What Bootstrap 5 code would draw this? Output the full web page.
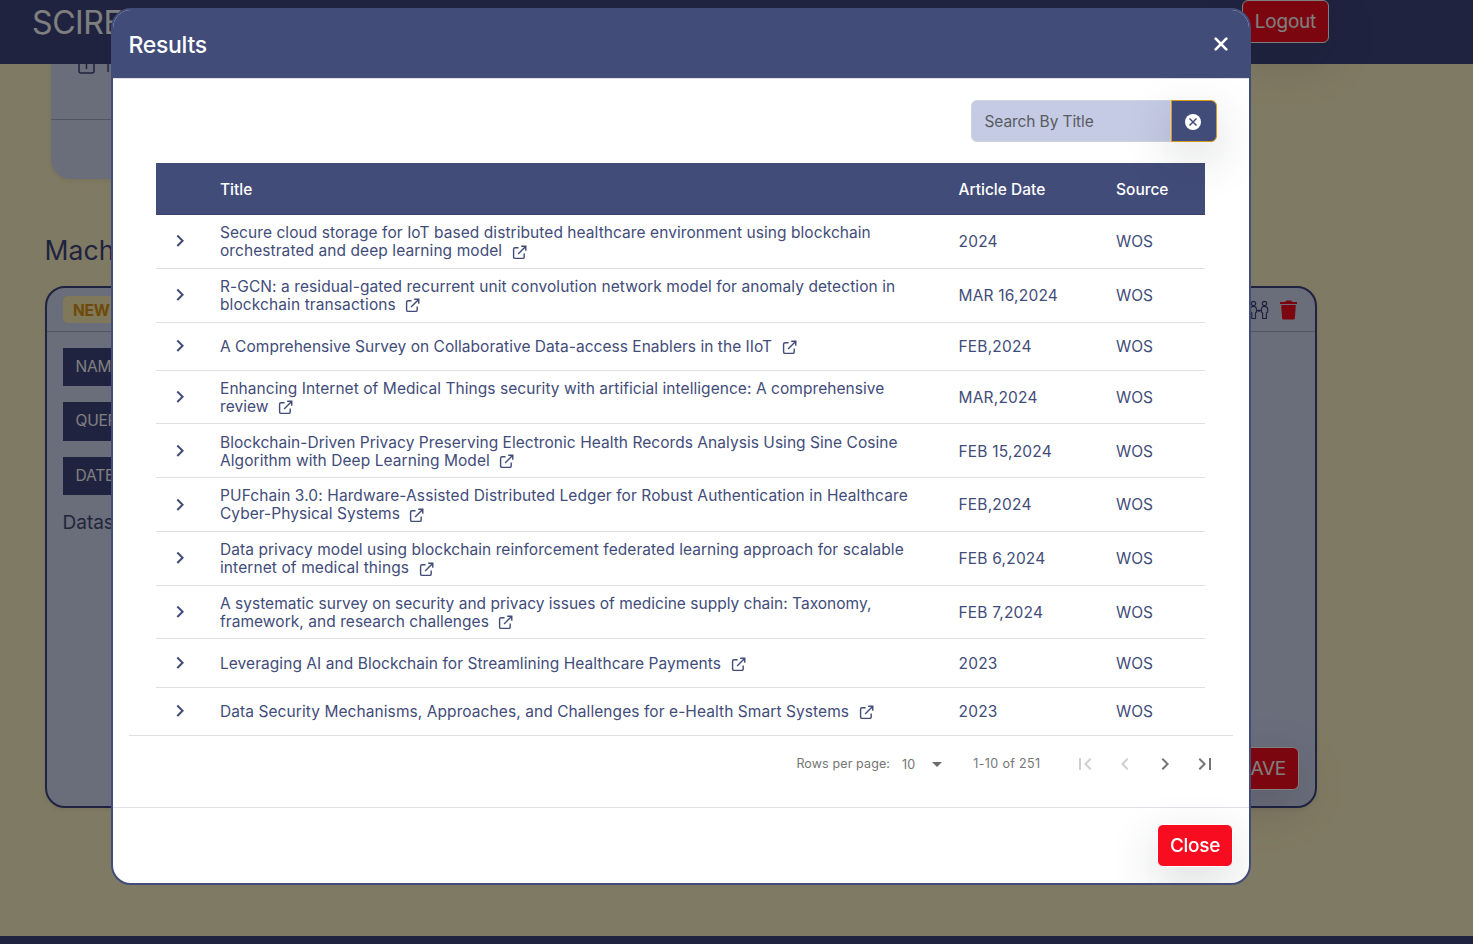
<!DOCTYPE html>
<html lang="en">
<head>
<meta charset="utf-8">
<meta name="viewport" content="width=device-width, initial-scale=1">
<title>Results</title>
<link href="https://cdn.jsdelivr.net/npm/bootstrap@5.3.0/dist/css/bootstrap.min.css" rel="stylesheet">
<style>
:root{--navy:#424c79;--deep:#3e4680;--lilac:#d4daf5;--rule:#e0e0e0}
body{font-family:Inter,"Liberation Sans",sans-serif;font-size:15.5px;color:var(--navy);background:#fff4c6;height:944px;overflow:hidden;letter-spacing:-.05px}
.topbar{height:64px;background:var(--deep);position:relative;z-index:1}
.brand{font-size:32px;line-height:46px;color:#fff;margin-left:32px;letter-spacing:-.4px}
.btn-red{background:#f70d1f;border:1px solid #fff;color:#fff;font-size:19px;line-height:29px;padding:6px 12px;border-radius:6px;height:43px;letter-spacing:-.25px}
.btn-red:hover{background:#d80b1b;color:#fff}
.logout{margin-right:144px}
.panel{background:var(--lilac);border-radius:20px}
.intro{margin:-36px 0 0 51px;width:900px;height:151px}
.intro-row{height:92px;border-bottom:1px solid #a5aac0;padding:27px 0 0 27px}
.mach{font-size:26.5px;font-weight:400;line-height:32px;margin:55px 0 0 44.5px;letter-spacing:.1px;color:var(--deep)}
.machine{margin:20px 0 0 45px;width:1272px;height:522px;border:2px solid var(--deep)}
.machine-head{height:44px;border-bottom:1px solid #a5aac0;padding:0 17px 0 16px}
.tag-new{background:#fff0b5;color:#dd9412;font-weight:700;border-radius:5px;padding:1px 10px 0;height:27px;line-height:28px;letter-spacing:-.2px}
.label-box{background:var(--deep);color:#fff;width:120px;height:38.4px;line-height:38.4px;padding-left:12.5px;margin:0 0 16px 16px;letter-spacing:-.2px}
.dataset{font-size:19px;line-height:24px;letter-spacing:0;margin-left:15.5px}
.veil{position:fixed;inset:0;background:#000;opacity:.5;z-index:5}
.dialog-wrap{position:fixed;inset:0;z-index:10;padding-top:8px}
.dialog-box{width:1140px;height:877px;margin-left:111px;background:#fff;border:2px solid var(--navy);border-radius:20px;overflow:hidden}
.dialog-head{background:var(--navy);color:#fff;height:70px;border-bottom:1px solid #dee2e6;padding:0 22px 0 16.5px;margin:-1px -1px 0}
.dialog-head h1{font-size:23px;font-weight:500;margin:4px 0 0;letter-spacing:-.3px}
.dialog-head svg{margin-top:1px}
.dialog-main{height:727.5px;padding:20.5px 16px 0}
.search-row{margin-right:16px;height:42px}
.search-row input{width:200px;background:#c5cae5;border:1px solid #ced4da;border-radius:6px 0 0 6px;padding:2px 12px 0 12.5px;font-size:15.5px;letter-spacing:-.1px}
.search-row input::placeholder{color:#595c5f}
.clear-btn{width:46px;background:var(--navy);border:1px solid #d99a1c;border-radius:0 6px 6px 0;padding:0;position:relative}
.clear-btn svg{margin-top:0;margin-right:2px}
.results{margin:21.5px 28px 0 27px}
.r-line{display:grid;grid-template-columns:48px 739px 157px 1fr;align-items:center;border-bottom:1px solid var(--rule);height:48.2px;line-height:18px}
.r-line.tall{height:53.75px}
.r-line>*{padding:1.5px 0 0 16px}
.r-line>:nth-child(3){padding-left:15.5px;letter-spacing:.2px}
.r-line>:first-child{padding:0;text-align:center;line-height:0}
.r-line.r-head{background:var(--navy);color:#fff;height:52px;border-color:#3a426d;font-weight:500}
.r-line.r-head>*{padding-top:2.5px;letter-spacing:0}
.r-line span.t{white-space:nowrap}
.ext{margin:-3px 0 0 9.5px;vertical-align:-3.5px}
.pager{border-top:1px solid var(--rule);height:57px;color:#757575;font-size:12.5px;letter-spacing:.12px;padding-right:8px;margin-top:-1px}
.pager>span:not(.icon-cell){padding-top:2px}
.pager .icon-cell{width:40px;text-align:center;line-height:0;padding-top:1px}
.off{opacity:.35}
.dialog-foot{border-top:1px solid #dee2e6;padding:16px;height:76px}
.close-btn{font-weight:500;letter-spacing:-.3px}
.page-foot{height:8px;background:var(--deep);margin-top:128px}
</style>
</head>
<body>
<svg width="0" height="0" class="d-none">
  <symbol id="chev" viewBox="0 0 24 24"><path d="M8.59 16.34l4.58-4.59-4.58-4.59L10 5.75l6 6-6 6z" fill="currentColor"/></symbol>
  <symbol id="extl" viewBox="0 0 16 16"><path d="M7 3H3.300Q1.700 3 1.700 4.600V12.700Q1.700 14.300 3.300 14.300H11.400Q13 14.300 13 12.700V9M9.800 1.300H14.700V6.200M14.500 1.500L6.500 9.500" fill="none" stroke="currentColor" stroke-width="1.5"/></symbol>
</svg>

<nav class="topbar d-flex justify-content-between align-items-start">
  <div class="brand">SCIREV</div>
  <button class="btn btn-red logout shadow-lg">Logout</button>
</nav>
<main>
  <section class="panel intro shadow-sm">
    <div class="intro-row d-flex gap-2">
      <svg width="17" height="19" viewBox="0 0 17 19" fill="none" stroke="#3e4680" stroke-width="1.5"><rect x="1" y="1" width="15" height="17" rx="2"/><path d="M8.5 4v10"/></svg><span>Title</span>
    </div>
  </section>
  <h2 class="mach">Machines</h2>
  <section class="panel machine shadow-sm d-flex flex-column">
    <div class="machine-head d-flex align-items-center justify-content-between">
      <span class="tag-new">NEW</span>
      <span class="d-flex align-items-center" style="gap:11px">
        <svg width="20" height="20" viewBox="0 0 20 20" fill="none" stroke="#3e4680" stroke-width="1.2"><circle cx="4.500" cy="3.500" r="2.200"/><circle cx="15.500" cy="3.500" r="2.200"/><path d="M4.500 6.300Q7.500 6.300 7.500 9.500V12L6.500 13V18.500H2.800V13L1.500 12V9.500Q1.500 6.300 4.500 6.300zM15.500 6.300Q18.700 6.300 18.700 9.500V12L17.400 13V18.500H13.600V13L12.400 12V9.500Q12.400 6.300 15.500 6.300zM7.500 10.700h5M10 9.500v2.400"/></svg>
        <svg width="18" height="20" viewBox="0 0 18 20" fill="#f70d1f"><path d="M0 2h5l1.500-1.600h4.500L12.500 2H17v2H0zM1.200 5h14.600l-.9 13q-.1 1.500-1.600 1.500H3.700q-1.500 0-1.600-1.500z"/></svg>
      </span>
    </div>
    <div class="flex-grow-1" style="padding-top:16px">
      <div class="label-box">NAME</div>
      <div class="label-box">QUERY</div>
      <div class="label-box">DATE</div>
      <div class="dataset">Dataset</div>
    </div>
    <div class="text-end pb-3 pe-3"><button class="btn btn-red shadow-lg">SAVE</button></div>
  </section>
  <div class="page-foot"></div>
</main>

<div class="veil"></div>
<div class="dialog-wrap">
 <div class="dialog-box" role="dialog" aria-label="Results">
  <header class="dialog-head d-flex align-items-center justify-content-between">
    <h1>Results</h1>
    <svg width="14" height="14" viewBox="0 0 14 14" stroke="#fff" stroke-width="2.6" stroke-linecap="round"><path d="M1.700 1.700l10.600 10.600M12.300 1.700L1.700 12.300"/></svg>
  </header>
  <div class="dialog-main">
    <div class="search-row d-flex justify-content-end">
      <input type="text" placeholder="Search By Title">
      <button class="btn clear-btn shadow-lg" aria-label="Clear"><svg width="16" height="16" viewBox="0 0 16 16"><circle cx="8" cy="8" r="8" fill="#fff"/><path d="M4.500 4.500l7 7M11.500 4.500l-7 7" stroke="#424c79" stroke-width="1.500"/></svg></button>
    </div>
    <div class="results" id="results">
      <div class="r-line r-head"><span></span><span>Title</span><span>Article Date</span><span>Source</span></div>
    </div>
    <div class="pager d-flex align-items-center justify-content-end">
      <span>Rows per page:</span>
      <span style="margin-left:12px;margin-top:1px">10</span>
      <svg width="10" height="5" viewBox="0 0 10 5" style="margin:2px 31px 0 17px"><path d="M0 0h10L5 5z" fill="#6b6b6b"/></svg>
      <span style="margin-right:24.5px;letter-spacing:.36px">1-10 of 251</span>
      <span class="icon-cell off"><svg width="24" height="24" viewBox="0 0 24 24" fill="currentColor"><path d="M18.410 16.590L13.820 12l4.590-4.590L17 6l-6 6 6 6zM6 6h2v12H6z"/></svg></span>
      <span class="icon-cell off"><svg width="24" height="24" viewBox="0 0 24 24" fill="currentColor"><path d="M15.410 7.410L14 6l-6 6 6 6 1.410-1.410L10.830 12z"/></svg></span>
      <span class="icon-cell"><svg width="24" height="24" viewBox="0 0 24 24" fill="currentColor"><path d="M10 6L8.590 7.410 13.170 12l-4.580 4.590L10 18l6-6z"/></svg></span>
      <span class="icon-cell"><svg width="24" height="24" viewBox="0 0 24 24" fill="currentColor"><path d="M5.590 7.410L10.180 12l-4.590 4.590L7 18l6-6-6-6zM16 6h2v12h-2z"/></svg></span>
    </div>
  </div>
  <footer class="dialog-foot d-flex justify-content-end"><button class="btn btn-red close-btn shadow-lg">Close</button></footer>
 </div>
</div>
<script>
// Each title line carries its tracking in px.
const rows=[
 [[["Secure cloud storage for IoT based distributed healthcare environment using blockchain",.065],["orchestrated and deep learning model",.075]],"2024"],
 [[["R-GCN: a residual-gated recurrent unit convolution network model for anomaly detection in",.085],["blockchain transactions",.1]],"MAR 16,2024"],
 [[["A Comprehensive Survey on Collaborative Data-access Enablers in the IIoT",.035]],"FEB,2024"],
 [[["Enhancing Internet of Medical Things security with artificial intelligence: A comprehensive",.06],["review",.05]],"MAR,2024"],
 [[["Blockchain-Driven Privacy Preserving Electronic Health Records Analysis Using Sine Cosine",.045],["Algorithm with Deep Learning Model",.065]],"FEB 15,2024"],
 [[["PUFchain 3.0: Hardware-Assisted Distributed Ledger for Robust Authentication in Healthcare",.1],["Cyber-Physical Systems",.05]],"FEB,2024"],
 [[["Data privacy model using blockchain reinforcement federated learning approach for scalable",.06],["internet of medical things",.1]],"FEB 6,2024"],
 [[["A systematic survey on security and privacy issues of medicine supply chain: Taxonomy,",.01],["framework, and research challenges",.05]],"FEB 7,2024"],
 [[["Leveraging AI and Blockchain for Streamlining Healthcare Payments",.055]],"2023"],
 [[["Data Security Mechanisms, Approaches, and Challenges for e-Health Smart Systems",.075]],"2023"]];
document.getElementById("results").insertAdjacentHTML("beforeend",rows.map(([t,d])=>
 `<div class="r-line ${t.length>1?"tall":""}"><span><svg width="24" height="24"><use href="#chev"/></svg></span><div>${t.map(([l,s])=>`<span class="t" style="letter-spacing:${s}px">${l}</span>`).join("<br>")}<svg class="ext" width="15" height="15"><use href="#extl"/></svg></div><span>${d}</span><span>WOS</span></div>`).join(""));
</script>
<script src="https://cdn.jsdelivr.net/npm/bootstrap@5.3.0/dist/js/bootstrap.bundle.min.js"></script>
</body>
</html>
